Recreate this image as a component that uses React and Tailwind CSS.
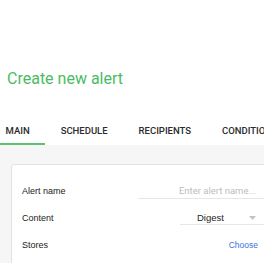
export default function App() {
  const tabs = ["MAIN", "SCHEDULE", "RECIPIENTS", "CONDITIONS"]

  return (
    <div className="w-[264px] h-[263px] overflow-hidden bg-white font-['Roboto',sans-serif]">
      {/* header + tabs */}
      <div className="h-[145px] flex flex-col bg-white">
        <h1 className="pt-[69px] pl-[7px] text-[16px] leading-[20px] text-[#4cbb63]">Create new alert</h1>
        <div className="mt-auto flex -ml-[10px] whitespace-nowrap">
          {tabs.map((t, i) => (
            <div
              key={t}
              className={`h-[29px] pt-[3px] px-[15.5px] flex items-center border-b-2 text-[9.5px] font-medium text-[#2b2b2b] ${
                i === 0 ? "border-[#5ac46f]" : "border-transparent"
              }`}
            >
              {t}
            </div>
          ))}
        </div>
      </div>

      {/* body */}
      <div className="h-[118px] bg-[#f6f6f6] pt-[19px] pl-[11px]">
        <div className="w-[270px] h-[120px] bg-white border border-[#e2e2e2] rounded-[3px] pt-[13px] px-[10px] font-['Liberation_Sans',sans-serif]">
          <div className="h-[27px] flex items-center">
            <span className="w-[116px] shrink-0 text-[9px] text-[#222]">Alert name</span>
            <div className="ml-auto w-[132px] h-[15px] border-b border-[#e6e6e6] flex items-center justify-end pr-[14px] font-['Roboto',sans-serif] text-[9.5px] text-[#bdbdbd]">
              Enter alert name...
            </div>
          </div>
          <div className="h-[27px] flex items-center">
            <span className="w-[116px] shrink-0 text-[9px] text-[#222]">Content</span>
            <div className="ml-auto w-[90px] h-[13px] border-b border-[#e6e6e6] flex items-center pl-[17px] pr-[14px] text-[9.5px] text-[#222]">
              <span>Digest</span>
              <svg className="ml-auto" width="7" height="4" viewBox="0 0 7 4">
                <path d="M0 0 L7 0 L3.5 4 Z" fill="#c4c4c4" />
              </svg>
            </div>
          </div>
          <div className="h-[27px] flex items-center">
            <span className="w-[116px] shrink-0 text-[9px] text-[#222]">Stores</span>
            <span className="ml-auto pr-[12px] text-[8.5px] text-[#3b73e0]">Choose</span>
          </div>
        </div>
      </div>
    </div>
  )
}
